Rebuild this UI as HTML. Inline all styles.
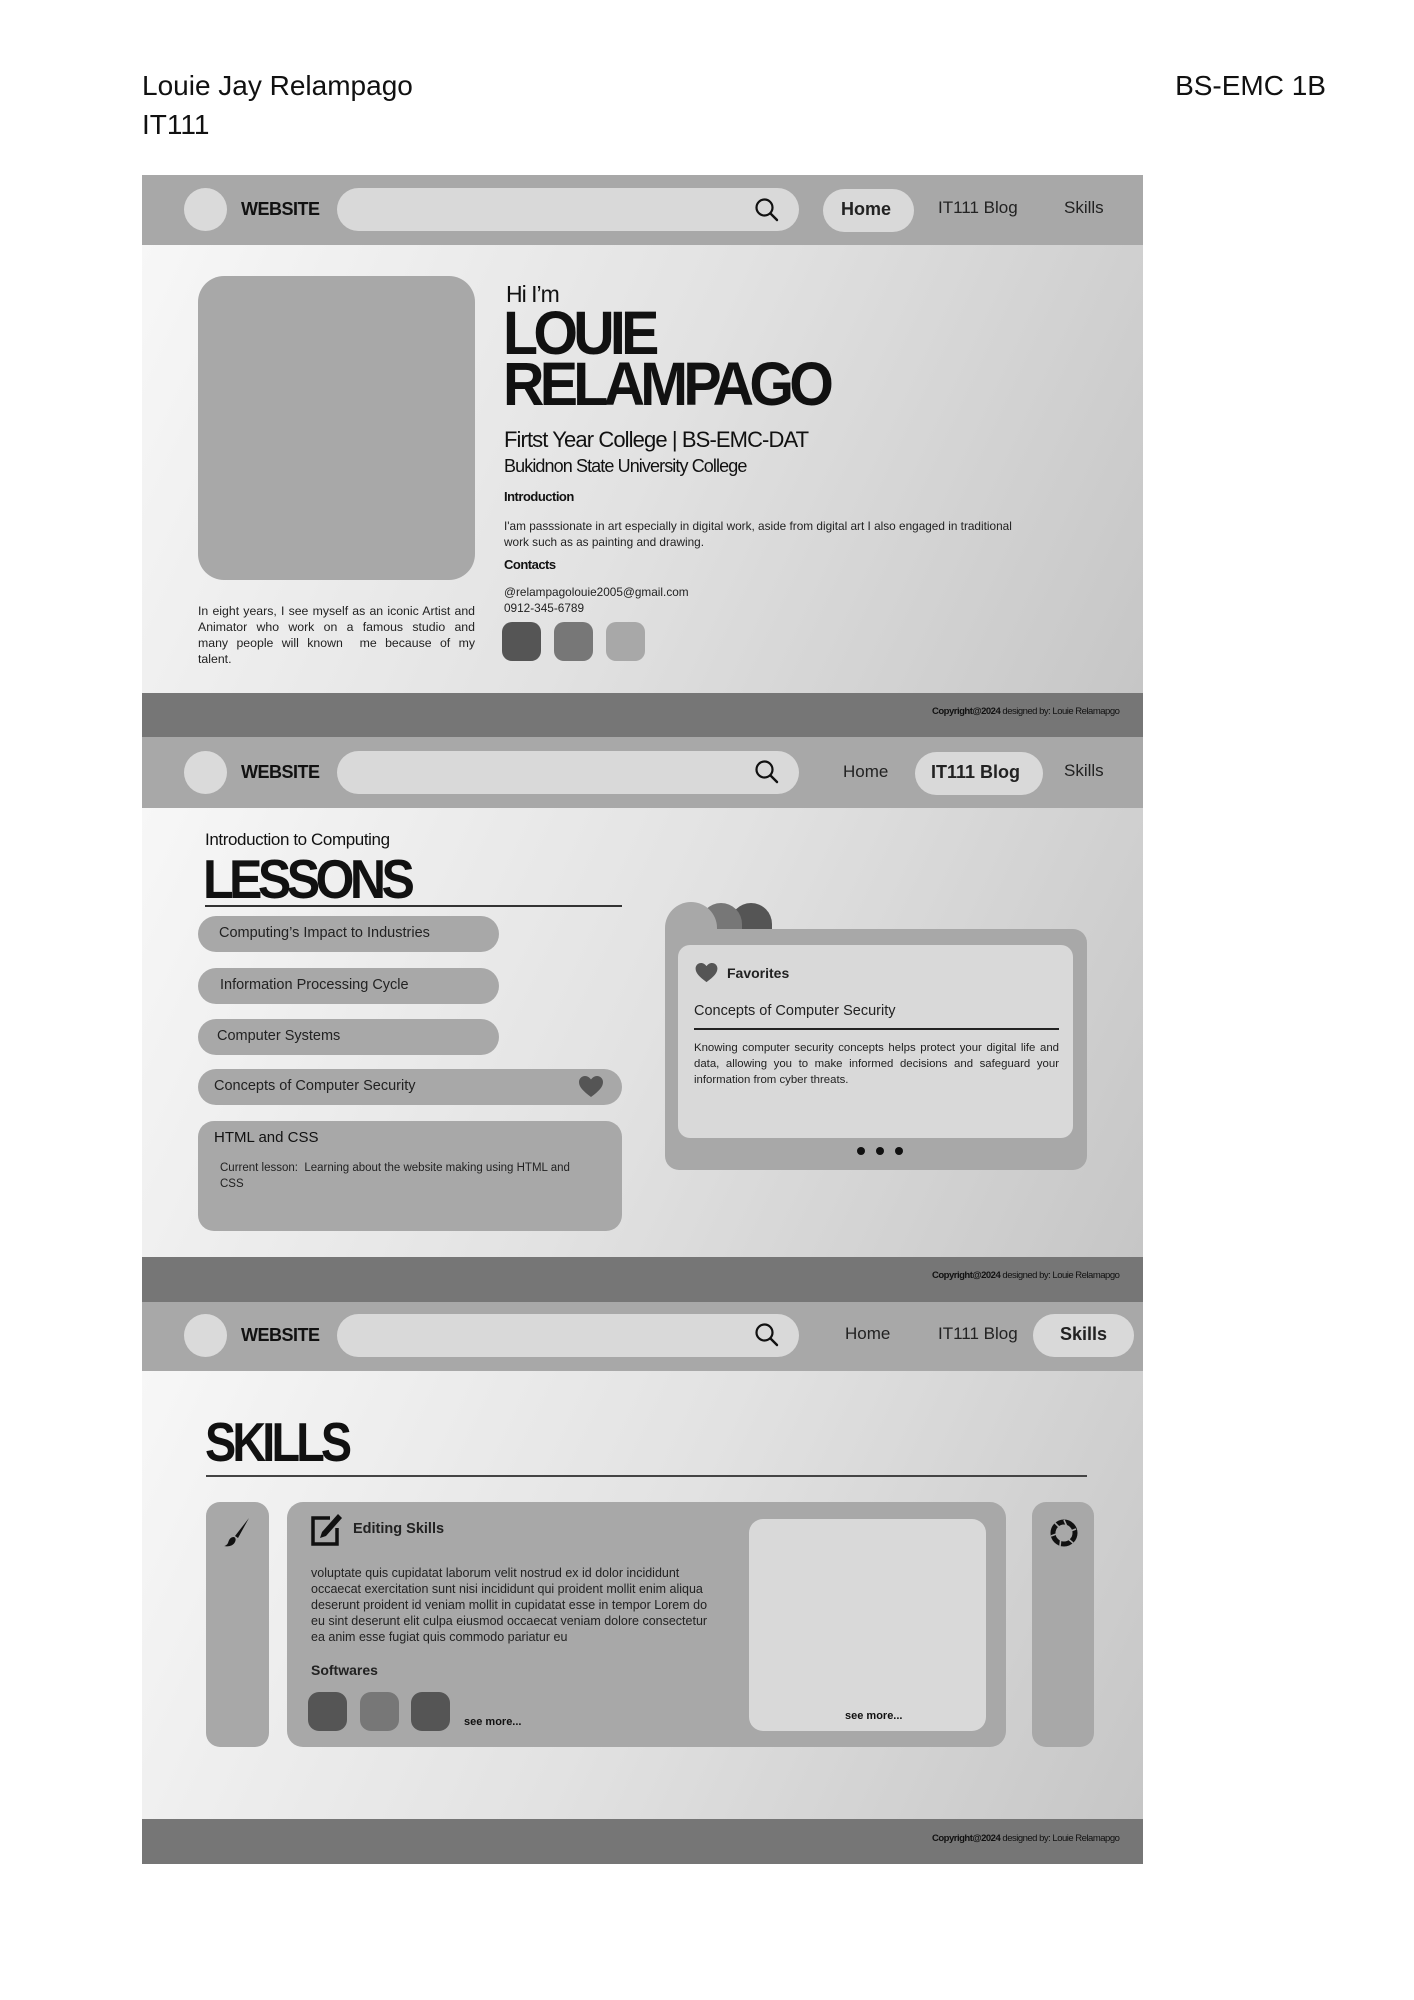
<!DOCTYPE html>
<html><head><meta charset="utf-8"><style>
*{margin:0;padding:0;box-sizing:border-box}
body{width:1414px;height:2000px;background:#fff;position:relative;font-family:"Liberation Sans",sans-serif;color:#111;overflow:hidden}
.a{position:absolute;white-space:nowrap}
.nav{position:absolute;left:142px;width:1001px;background:#a8a8a8}
.content{position:absolute;left:142px;width:1001px;background:linear-gradient(115deg,#f7f7f7 0%,#e2e2e2 50%,#c6c6c6 100%)}
.foot{position:absolute;left:142px;width:1001px;background:#767676}
.circ{position:absolute;width:43px;height:43px;border-radius:50%;background:#dadada}
.search{position:absolute;height:43px;background:#d9d9d9;border-radius:22px}
.pill{position:absolute;background:#d9d9d9;border-radius:22px}
.nt{position:absolute;font-size:17px;color:#222}
.gbox{position:absolute;background:#a8a8a8}
.copy{position:absolute;font-size:9.5px;letter-spacing:-0.5px;color:#111}
p.j{text-align:justify;white-space:normal}
.jl{text-align:justify;text-align-last:justify;white-space:normal;display:block}
</style></head><body>

<div class="a" style="left:142px;top:70px;font-size:28px;color:#111">Louie Jay Relampago</div>
<div class="a" style="left:142px;top:109px;font-size:28px;color:#111">IT111</div>
<div class="a" style="right:88px;top:70px;font-size:28px;color:#111">BS-EMC 1B</div>

<!-- SECTION 1 -->
<div class="nav" style="top:175px;height:70px"></div>
<div class="circ" style="left:184px;top:188px"></div>
<div class="a" style="left:241px;top:199px;font-size:18px;font-weight:bold;letter-spacing:-0.5px">WEBSITE</div>
<div class="search" style="left:337px;top:188px;width:462px"></div>
<svg class="a" style="left:754px;top:197px" width="26" height="26" viewBox="0 0 26 26"><circle cx="10.5" cy="10.5" r="8" fill="none" stroke="#111" stroke-width="2.2"/><line x1="16.5" y1="16.5" x2="23" y2="23" stroke="#111" stroke-width="2.4" stroke-linecap="round"/></svg>
<div class="pill" style="left:823px;top:189px;width:91px;height:43px"></div>
<div class="nt" style="left:841px;top:199px;font-weight:bold;font-size:18px">Home</div>
<div class="nt" style="left:938px;top:198px">IT111 Blog</div>
<div class="nt" style="left:1064px;top:198px">Skills</div>

<div class="content" style="top:245px;height:448px"></div>
<div class="gbox" style="left:198px;top:276px;width:277px;height:304px;border-radius:26px"></div>
<div class="a" style="left:506px;top:281px;font-size:23px;letter-spacing:-1px">Hi I’m</div>
<div class="a" style="left:503px;top:308px;font-size:61px;font-weight:bold;letter-spacing:-5px;line-height:51px;transform:scaleX(0.94);transform-origin:left top">LOUIE<br>RELAMPAGO</div>
<div class="a" style="left:504px;top:427px;font-size:22px;letter-spacing:-0.9px">Firtst Year College | BS-EMC-DAT</div>
<div class="a" style="left:504px;top:456px;font-size:18px;letter-spacing:-0.9px">Bukidnon State University College</div>
<div class="a" style="left:504px;top:489px;font-size:13px;font-weight:bold;letter-spacing:-0.5px">Introduction</div>
<div class="a" style="left:504px;top:518px;font-size:11.8px;line-height:16px;color:#222">I'am passsionate in art especially in digital work, aside from digital art I also engaged in traditional<br>work such as as painting and drawing.</div>
<div class="a" style="left:504px;top:557px;font-size:13px;font-weight:bold;letter-spacing:-0.5px">Contacts</div>
<div class="a" style="left:504px;top:584px;font-size:11.8px;line-height:16px;color:#222">@relampagolouie2005@gmail.com<br>0912-345-6789</div>
<div class="a" style="left:502px;top:622px;width:39px;height:39px;border-radius:10px;background:#555"></div>
<div class="a" style="left:554px;top:622px;width:39px;height:39px;border-radius:10px;background:#777"></div>
<div class="a" style="left:606px;top:622px;width:39px;height:39px;border-radius:10px;background:#a8a8a8"></div>
<div class="a" style="left:198px;top:603px;width:277px;font-size:12.3px;line-height:16px;color:#222;white-space:normal">
<span class="jl">In eight years, I see myself as an iconic Artist and</span>
<span class="jl">Animator who work on a famous studio and</span>
<span class="jl">many people will known &nbsp;me because of my</span>
<span style="display:block">talent.</span></div>

<div class="foot" style="top:693px;height:44px"></div>
<div class="copy" style="left:932px;top:706px"><b>Copyright@2024</b> designed by: Louie Relamapgo</div>

<!-- SECTION 2 -->
<div class="nav" style="top:737px;height:71px"></div>
<div class="circ" style="left:184px;top:751px"></div>
<div class="a" style="left:241px;top:762px;font-size:18px;font-weight:bold;letter-spacing:-0.5px">WEBSITE</div>
<div class="search" style="left:337px;top:751px;width:462px"></div>
<svg class="a" style="left:754px;top:759px" width="26" height="26" viewBox="0 0 26 26"><circle cx="10.5" cy="10.5" r="8" fill="none" stroke="#111" stroke-width="2.2"/><line x1="16.5" y1="16.5" x2="23" y2="23" stroke="#111" stroke-width="2.4" stroke-linecap="round"/></svg>
<div class="nt" style="left:843px;top:762px">Home</div>
<div class="pill" style="left:915px;top:752px;width:128px;height:43px"></div>
<div class="nt" style="left:931px;top:762px;font-weight:bold;font-size:18px">IT111 Blog</div>
<div class="nt" style="left:1064px;top:761px">Skills</div>

<div class="content" style="top:808px;height:449px"></div>
<div class="a" style="left:205px;top:830px;font-size:17px;letter-spacing:-0.4px">Introduction to Computing</div>
<div class="a" style="left:203px;top:847px;font-size:55px;font-weight:bold;letter-spacing:-5px;transform:scaleX(0.91);transform-origin:left top">LESSONS</div>
<div class="a" style="left:205px;top:905px;width:417px;height:2px;background:#333"></div>
<div class="gbox" style="left:198px;top:916px;width:301px;height:36px;border-radius:18px"></div>
<div class="a" style="left:219px;top:925px;font-size:14.5px;color:#222">Computing’s Impact to Industries</div>
<div class="gbox" style="left:198px;top:968px;width:301px;height:36px;border-radius:18px"></div>
<div class="a" style="left:220px;top:977px;font-size:14.5px;color:#222">Information Processing Cycle</div>
<div class="gbox" style="left:198px;top:1019px;width:301px;height:36px;border-radius:18px"></div>
<div class="a" style="left:217px;top:1028px;font-size:14.5px;color:#222">Computer Systems</div>
<div class="gbox" style="left:198px;top:1069px;width:424px;height:36px;border-radius:18px"></div>
<div class="a" style="left:214px;top:1078px;font-size:14.5px;color:#222">Concepts of Computer Security</div>
<svg class="a" style="left:579px;top:1076px" width="24" height="22" viewBox="0 0 24 22"><path d="M12 21 C4 15 0 11 0 6 C0 2.5 2.8 0 6 0 C8.5 0 10.5 1.5 12 3.5 C13.5 1.5 15.5 0 18 0 C21.2 0 24 2.5 24 6 C24 11 20 15 12 21Z" fill="#555"/></svg>
<div class="gbox" style="left:198px;top:1121px;width:424px;height:110px;border-radius:16px"></div>
<div class="a" style="left:214px;top:1129px;font-size:15px;color:#111">HTML and CSS</div>
<div class="a" style="left:220px;top:1160px;font-size:11.5px;line-height:16px;color:#222">Current lesson: &nbsp;Learning about the website making using HTML and<br>CSS</div>

<div class="a" style="left:730px;top:903px;width:42px;height:50px;border-radius:21px 21px 0 0;background:#555"></div>
<div class="a" style="left:700px;top:903px;width:42px;height:50px;border-radius:21px 21px 0 0;background:#777"></div>
<div class="gbox" style="left:665px;top:902px;width:52px;height:70px;border-radius:26px 26px 0 0"></div>
<div class="gbox" style="left:665px;top:929px;width:422px;height:241px;border-radius:14px"></div>
<div class="a" style="left:678px;top:945px;width:395px;height:193px;border-radius:12px;background:#d9d9d9"></div>
<svg class="a" style="left:694px;top:963px" width="25" height="20" viewBox="0 0 24 22"><path d="M12 21 C4 15 0 11 0 6 C0 2.5 2.8 0 6 0 C8.5 0 10.5 1.5 12 3.5 C13.5 1.5 15.5 0 18 0 C21.2 0 24 2.5 24 6 C24 11 20 15 12 21Z" fill="#555"/></svg>
<div class="a" style="left:727px;top:965px;font-size:14px;font-weight:bold;color:#222">Favorites</div>
<div class="a" style="left:694px;top:1003px;font-size:14.5px;color:#222">Concepts of Computer Security</div>
<div class="a" style="left:694px;top:1028px;width:365px;height:2px;background:#222"></div>
<p class="a j" style="left:694px;top:1040px;width:365px;font-size:11.4px;line-height:16px;color:#222">Knowing computer security concepts helps protect your digital life and data, allowing you to make informed decisions and safeguard your information from cyber threats.</p>
<div class="a" style="left:857px;top:1147px;width:8px;height:8px;border-radius:50%;background:#111"></div>
<div class="a" style="left:876px;top:1147px;width:8px;height:8px;border-radius:50%;background:#111"></div>
<div class="a" style="left:895px;top:1147px;width:8px;height:8px;border-radius:50%;background:#111"></div>

<div class="foot" style="top:1257px;height:45px"></div>
<div class="copy" style="left:932px;top:1270px"><b>Copyright@2024</b> designed by: Louie Relamapgo</div>

<!-- SECTION 3 -->
<div class="nav" style="top:1302px;height:69px"></div>
<div class="circ" style="left:184px;top:1314px"></div>
<div class="a" style="left:241px;top:1325px;font-size:18px;font-weight:bold;letter-spacing:-0.5px">WEBSITE</div>
<div class="search" style="left:337px;top:1314px;width:462px"></div>
<svg class="a" style="left:754px;top:1322px" width="26" height="26" viewBox="0 0 26 26"><circle cx="10.5" cy="10.5" r="8" fill="none" stroke="#111" stroke-width="2.2"/><line x1="16.5" y1="16.5" x2="23" y2="23" stroke="#111" stroke-width="2.4" stroke-linecap="round"/></svg>
<div class="nt" style="left:845px;top:1324px">Home</div>
<div class="nt" style="left:938px;top:1324px">IT111 Blog</div>
<div class="pill" style="left:1033px;top:1314px;width:101px;height:43px"></div>
<div class="nt" style="left:1060px;top:1324px;font-weight:bold;font-size:18px">Skills</div>

<div class="content" style="top:1371px;height:448px"></div>
<div class="a" style="left:205px;top:1410px;font-size:55px;font-weight:bold;letter-spacing:-4.5px;transform:scaleX(0.85);transform-origin:left top">SKILLS</div>
<div class="a" style="left:206px;top:1475px;width:881px;height:2px;background:#444"></div>
<div class="gbox" style="left:206px;top:1502px;width:63px;height:245px;border-radius:14px"></div>
<svg class="a" style="left:222px;top:1516px" width="30" height="32" viewBox="0 0 30 32"><path d="M27 2 L13 20 L16 22 Z" fill="#111"/><path d="M12 21 C8 21 7 24 6 27 C5 29 3 30 2 30 C6 31 11 30 13 26 C14 24 14 22 12 21Z" fill="#111"/></svg>
<div class="gbox" style="left:287px;top:1502px;width:719px;height:245px;border-radius:16px"></div>
<svg class="a" style="left:309px;top:1512px" width="36" height="36" viewBox="0 0 36 36"><path d="M21 6 H4 V32 H28 V16" fill="none" stroke="#111" stroke-width="3.5"/><path d="M29 2 L33 6 L17 24 L11 26 L13 20 Z" fill="#111"/></svg>
<div class="a" style="left:353px;top:1521px;font-size:14.5px;font-weight:bold;color:#222">Editing Skills</div>
<div class="a" style="left:311px;top:1565px;font-size:12.5px;line-height:16px;color:#222">voluptate quis cupidatat laborum velit nostrud ex id dolor incididunt<br>occaecat exercitation sunt nisi incididunt qui proident mollit enim aliqua<br>deserunt proident id veniam mollit in cupidatat esse in tempor Lorem do<br>eu sint deserunt elit culpa eiusmod occaecat veniam dolore consectetur<br>ea anim esse fugiat quis commodo pariatur eu</div>
<div class="a" style="left:311px;top:1662px;font-size:14px;font-weight:bold;color:#222">Softwares</div>
<div class="a" style="left:308px;top:1692px;width:39px;height:39px;border-radius:11px;background:#555"></div>
<div class="a" style="left:360px;top:1692px;width:39px;height:39px;border-radius:11px;background:#777"></div>
<div class="a" style="left:411px;top:1692px;width:39px;height:39px;border-radius:11px;background:#555"></div>
<div class="a" style="left:464px;top:1716px;font-size:11px;font-weight:bold;color:#111">see more...</div>
<div class="a" style="left:749px;top:1519px;width:237px;height:212px;border-radius:14px;background:#d9d9d9"></div>
<div class="a" style="left:845px;top:1710px;font-size:11px;font-weight:bold;color:#111">see more...</div>
<div class="gbox" style="left:1032px;top:1502px;width:62px;height:245px;border-radius:14px"></div>
<svg class="a" style="left:1048px;top:1517px" width="32" height="32" viewBox="0 0 32 32"><circle cx="16" cy="16" r="11" fill="none" stroke="#111" stroke-width="5"/><g stroke="#a8a8a8" stroke-width="1.6"><line x1="16" y1="3" x2="20" y2="12"/><line x1="28" y1="12" x2="20" y2="15"/><line x1="25" y1="26" x2="18" y2="20"/><line x1="12" y1="29" x2="13" y2="20"/><line x1="3" y1="19" x2="11" y2="16"/><line x1="7" y1="6" x2="13" y2="12"/></g></svg>

<div class="foot" style="top:1819px;height:45px"></div>
<div class="copy" style="left:932px;top:1833px"><b>Copyright@2024</b> designed by: Louie Relamapgo</div>

</body></html>
